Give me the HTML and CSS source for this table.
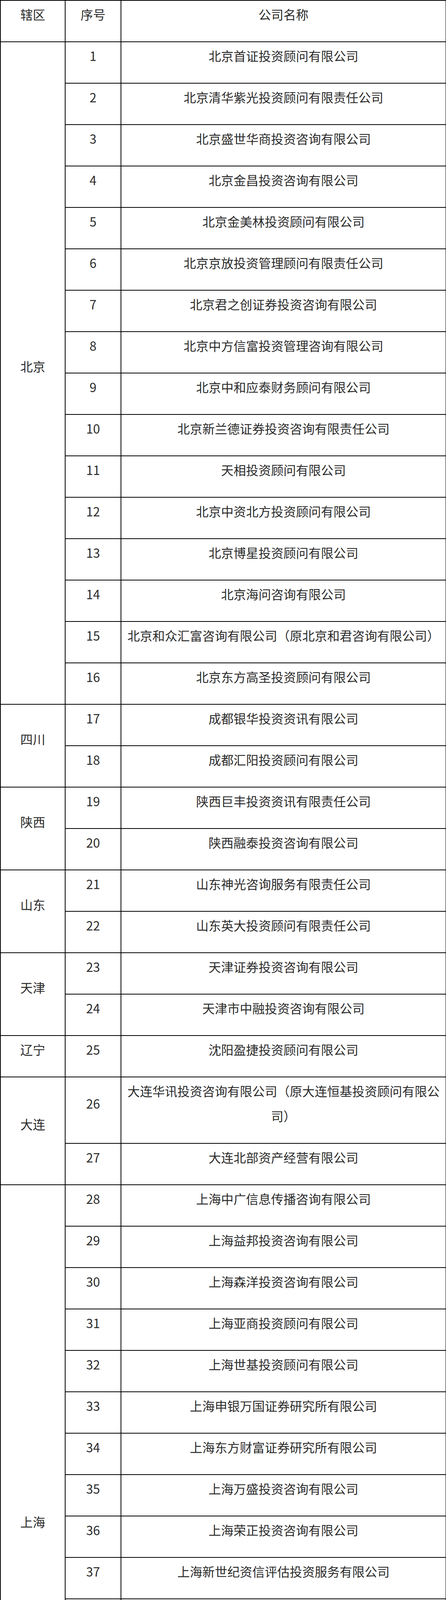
FILE: index.html
```html
<!DOCTYPE html>
<html lang="zh-CN">
<head>
<meta charset="utf-8">
<title>证券投资咨询机构名单</title>
<link rel="stylesheet" href="styles.css">
</head>
<body>
<table class="list">
<colgroup><col class="c-region"><col class="c-no"><col class="c-name"></colgroup>
<tbody>
<tr><td>辖区</td><td>序号</td><td>公司名称</td></tr>
<tr><td rowspan="16">北京</td><td>1</td><td>北京首证投资顾问有限公司</td></tr>
<tr><td>2</td><td>北京清华紫光投资顾问有限责任公司</td></tr>
<tr><td>3</td><td>北京盛世华商投资咨询有限公司</td></tr>
<tr><td>4</td><td>北京金昌投资咨询有限公司</td></tr>
<tr><td>5</td><td>北京金美林投资顾问有限公司</td></tr>
<tr><td>6</td><td>北京京放投资管理顾问有限责任公司</td></tr>
<tr><td>7</td><td>北京君之创证券投资咨询有限公司</td></tr>
<tr><td>8</td><td>北京中方信富投资管理咨询有限公司</td></tr>
<tr><td>9</td><td>北京中和应泰财务顾问有限公司</td></tr>
<tr><td>10</td><td>北京新兰德证券投资咨询有限责任公司</td></tr>
<tr><td>11</td><td>天相投资顾问有限公司</td></tr>
<tr><td>12</td><td>北京中资北方投资顾问有限公司</td></tr>
<tr><td>13</td><td>北京博星投资顾问有限公司</td></tr>
<tr><td>14</td><td>北京海问咨询有限公司</td></tr>
<tr><td>15</td><td>北京和众汇富咨询有限公司（原北京和君咨询有限公司）</td></tr>
<tr><td>16</td><td>北京东方高圣投资顾问有限公司</td></tr>
<tr><td rowspan="2">四川</td><td>17</td><td>成都银华投资资讯有限公司</td></tr>
<tr><td>18</td><td>成都汇阳投资顾问有限公司</td></tr>
<tr><td rowspan="2">陕西</td><td>19</td><td>陕西巨丰投资资讯有限责任公司</td></tr>
<tr><td>20</td><td>陕西融泰投资咨询有限公司</td></tr>
<tr><td rowspan="2">山东</td><td>21</td><td>山东神光咨询服务有限责任公司</td></tr>
<tr><td>22</td><td>山东英大投资顾问有限责任公司</td></tr>
<tr><td rowspan="2">天津</td><td>23</td><td>天津证券投资咨询有限公司</td></tr>
<tr><td>24</td><td>天津市中融投资咨询有限公司</td></tr>
<tr><td>辽宁</td><td>25</td><td>沈阳盈捷投资顾问有限公司</td></tr>
<tr><td rowspan="2">大连</td><td>26</td><td>大连华讯投资咨询有限公司（原大连恒基投资顾问有限公司）</td></tr>
<tr><td>27</td><td>大连北部资产经营有限公司</td></tr>
<tr><td rowspan="16">上海</td><td>28</td><td>上海中广信息传播咨询有限公司</td></tr>
<tr><td>29</td><td>上海益邦投资咨询有限公司</td></tr>
<tr><td>30</td><td>上海森洋投资咨询有限公司</td></tr>
<tr><td>31</td><td>上海亚商投资顾问有限公司</td></tr>
<tr><td>32</td><td>上海世基投资顾问有限公司</td></tr>
<tr><td>33</td><td>上海申银万国证券研究所有限公司</td></tr>
<tr><td>34</td><td>上海东方财富证券研究所有限公司</td></tr>
<tr><td>35</td><td>上海万盛投资咨询有限公司</td></tr>
<tr><td>36</td><td>上海荣正投资咨询有限公司</td></tr>
<tr><td>37</td><td>上海新世纪资信评估投资服务有限公司</td></tr>
<tr><td>38</td><td>上海证联投资咨询服务有限责任公司</td></tr>
<tr><td>39</td><td>上海涌金理财顾问有限公司</td></tr>
<tr><td>40</td><td>上海大智慧投资咨询有限公司</td></tr>
<tr><td>41</td><td>上海新资源证券咨询有限公司</td></tr>
<tr><td>42</td><td>上海益盟投资管理有限公司</td></tr>
<tr><td>43</td><td>上海迈步投资管理有限公司（原青岛安信投资顾问有限责任公司）</td></tr>
<tr><td>海南</td><td>44</td><td>海南港澳资讯产业股份有限公司</td></tr>
<tr><td>江苏</td><td>45</td><td>无锡金百灵投资咨询有限公司</td></tr>
<tr><td rowspan="4">厦门</td><td>46</td><td>厦门市鑫鼎盛证券投资咨询服务有限公司</td></tr>
<tr><td>47</td><td>厦门高能投资咨询有限公司</td></tr>
<tr><td>48</td><td>厦门市新汇通投资咨询有限公司</td></tr>
<tr><td>49</td><td>厦门世纪金龙投资咨询有限公司</td></tr>
<tr><td rowspan="3">浙江</td><td>50</td><td>浙江国金投资咨询有限公司</td></tr>
<tr><td>51</td><td>杭州海能证券投资顾问有限公司（原杭州新希望证券投资顾问有限公司）</td></tr>
<tr><td>52</td><td>杭州三元证券投资顾问有限公司</td></tr>
<tr><td>宁波</td><td>53</td><td>宁波海顺投资咨询有限公司</td></tr>
<tr><td rowspan="2">重庆</td><td>54</td><td>重庆博股通金证券投资咨询有限公司</td></tr>
<tr><td>55</td><td>重庆东金管理顾问有限公司</td></tr>
<tr><td rowspan="4">广东</td><td>56</td><td>广州越声理财咨询有限公司</td></tr>
<tr><td>57</td><td>广州市万隆证券咨询顾问有限公司</td></tr>
<tr><td>58</td><td>广东科德投资顾问有限公司</td></tr>
<tr><td>59</td><td>广州汇正财经顾问有限公司</td></tr>
<tr><td rowspan="5">深圳</td><td>60</td><td>深圳市尊悦证券投资顾问有限公司</td></tr>
<tr><td>61</td><td>深圳市怀新企业投资顾问有限公司</td></tr>
<tr><td>62</td><td>深圳市中证投资资讯有限公司</td></tr>
<tr><td>63</td><td>深圳市新兰德证券投资咨询有限公司</td></tr>
<tr><td>64</td><td>深圳市国诚投资咨询有限公司</td></tr>
<tr><td>河南</td><td>65</td><td>河南九鼎德盛投资顾问有限公司</td></tr>
<tr><td>云南</td><td>66</td><td>云南产业投资管理有限公司</td></tr>
<tr><td rowspan="2">安徽</td><td>67</td><td>安徽大时代投资咨询有限公司</td></tr>
<tr><td>68</td><td>安徽华安新兴证券投资咨询有限责任公司</td></tr>
<tr><td>青岛</td><td>69</td><td>青岛市大摩投资咨询有限公司</td></tr>
<tr><td>河北</td><td>70</td><td>河北源达证券投资咨询有限公司</td></tr>
<tr><td>福建</td><td>71</td><td>福建天信投资咨询顾问有限公司</td></tr>
</tbody>
</table>
</body>
</html>
```
FILE: styles.css
```css
html, body {
  margin: 0;
  padding: 0;
  background: #ffffff;
}

body {
  min-height: 7954px;
}

.list {
  border-collapse: collapse;
  table-layout: fixed;
  width: 1142px;
  font-family: "Noto Sans CJK SC", "Noto Sans", sans-serif;
  font-size: 32px;
  color: #2b2b2b;
}

.c-region { width: 166px; }
.c-no { width: 143px; }
.c-name { width: 833px; }

.list td {
  border: 2px solid #000000;
  text-align: center;
  vertical-align: middle;
  padding: 2px 10px 38px;
  line-height: 64px;
}
```
